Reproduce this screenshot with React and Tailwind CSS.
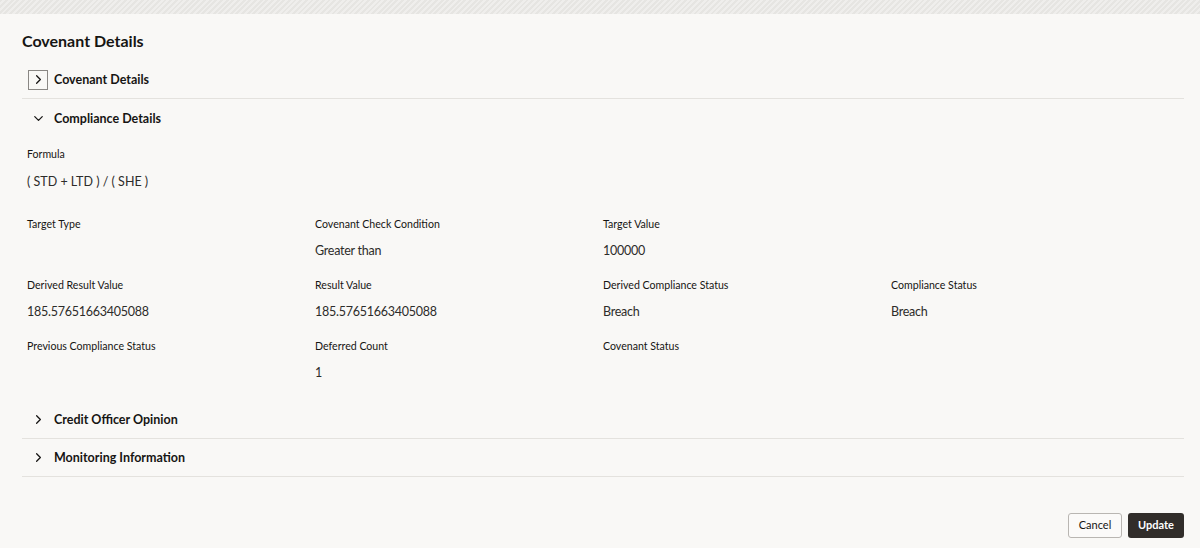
import React from "react";
import { ChevronRight, ChevronDown } from "lucide-react";

const fields = [
  { label: "Target Type", value: "" },
  { label: "Covenant Check Condition", value: "Greater than" },
  { label: "Target Value", value: "100000" },
  { label: "", value: "" },
  { label: "Derived Result Value", value: "185.57651663405088" },
  { label: "Result Value", value: "185.57651663405088" },
  { label: "Derived Compliance Status", value: "Breach" },
  { label: "Compliance Status", value: "Breach" },
  { label: "Previous Compliance Status", value: "" },
  { label: "Deferred Count", value: "1" },
  { label: "Covenant Status", value: "" },
  { label: "", value: "" },
];

const SectionHeader = ({ title, open, boxed, line = true }) => (
  <div
    className={
      line
        ? "h-[38px] flex items-center border-b border-[#e4e2de]"
        : "h-[38px] flex items-center"
    }
  >
    <div
      className={
        boxed
          ? "ml-[6px] w-[20px] h-[20px] flex items-center justify-center border border-[#8a8784]"
          : "ml-[6px] w-[20px] h-[20px] flex items-center justify-center"
      }
    >
      {open ? (
        <ChevronDown size={15} strokeWidth={2} className="text-[#161513]" />
      ) : (
        <ChevronRight size={15} strokeWidth={2} className="text-[#161513]" />
      )}
    </div>
    <span className="ml-[6px] pt-[2px] text-[12.5px] font-bold text-[#161513]">{title}</span>
  </div>
);

const App = () => {
  return (
    <div
      className="w-[1200px] h-[548px] bg-[#f9f8f6] flex flex-col overflow-hidden"
      style={{ fontFamily: 'Lato, "Noto Sans", sans-serif' }}
    >
      {/* textured top strip */}
      <div className="h-[14px] bg-[repeating-linear-gradient(135deg,#e6e5e2_0px,#e6e5e2_2px,#efeeec_2px,#efeeec_4px)]" />

      <div className="px-[22px] pr-[16px] flex flex-col">
        <h1 className="mt-[16px] h-[22px] leading-[22px] text-[16px] font-bold text-[#161513]">
          Covenant Details
        </h1>

        <div className="mt-[9px]">
          <SectionHeader title="Covenant Details" boxed />
          <SectionHeader title="Compliance Details" open line={false} />
        </div>

        {/* compliance body */}
        <div className="pl-[5px] pt-[9px]">
          <div className="h-[16px] leading-[16px] text-[10.6px] text-[#161513]">Formula</div>
          <div className="mt-[10px] h-[20px] leading-[20px] text-[12.5px] text-[#2d2c2a]">
            ( STD + LTD ) / ( SHE )
          </div>

          <div className="mt-[24px] grid grid-cols-4 gap-y-[16px] w-[1152px]">
            {fields.map((f, i) => (
              <div key={i} className="h-[45px]">
                <div className="h-[16px] leading-[16px] text-[10.6px] text-[#161513]">{f.label}</div>
                <div className="mt-[9px] h-[20px] leading-[20px] text-[12.5px] text-[#2d2c2a] tracking-[-0.02em]">
                  {f.value}
                </div>
              </div>
            ))}
          </div>
        </div>

        <div className="mt-[18px]">
          <SectionHeader title="Credit Officer Opinion" />
          <SectionHeader title="Monitoring Information" />
        </div>

        <div className="mt-[36px] flex justify-end gap-[6px]">
          <button className="h-[25px] w-[54px] rounded-[3px] border border-[#b9b6b2] bg-[#fbfaf9] text-[11px] text-[#161513]">
            Cancel
          </button>
          <button className="h-[25px] w-[56px] rounded-[3px] bg-[#312d2a] text-[11px] font-bold text-white">
            Update
          </button>
        </div>
      </div>
    </div>
  );
};

export default App;
